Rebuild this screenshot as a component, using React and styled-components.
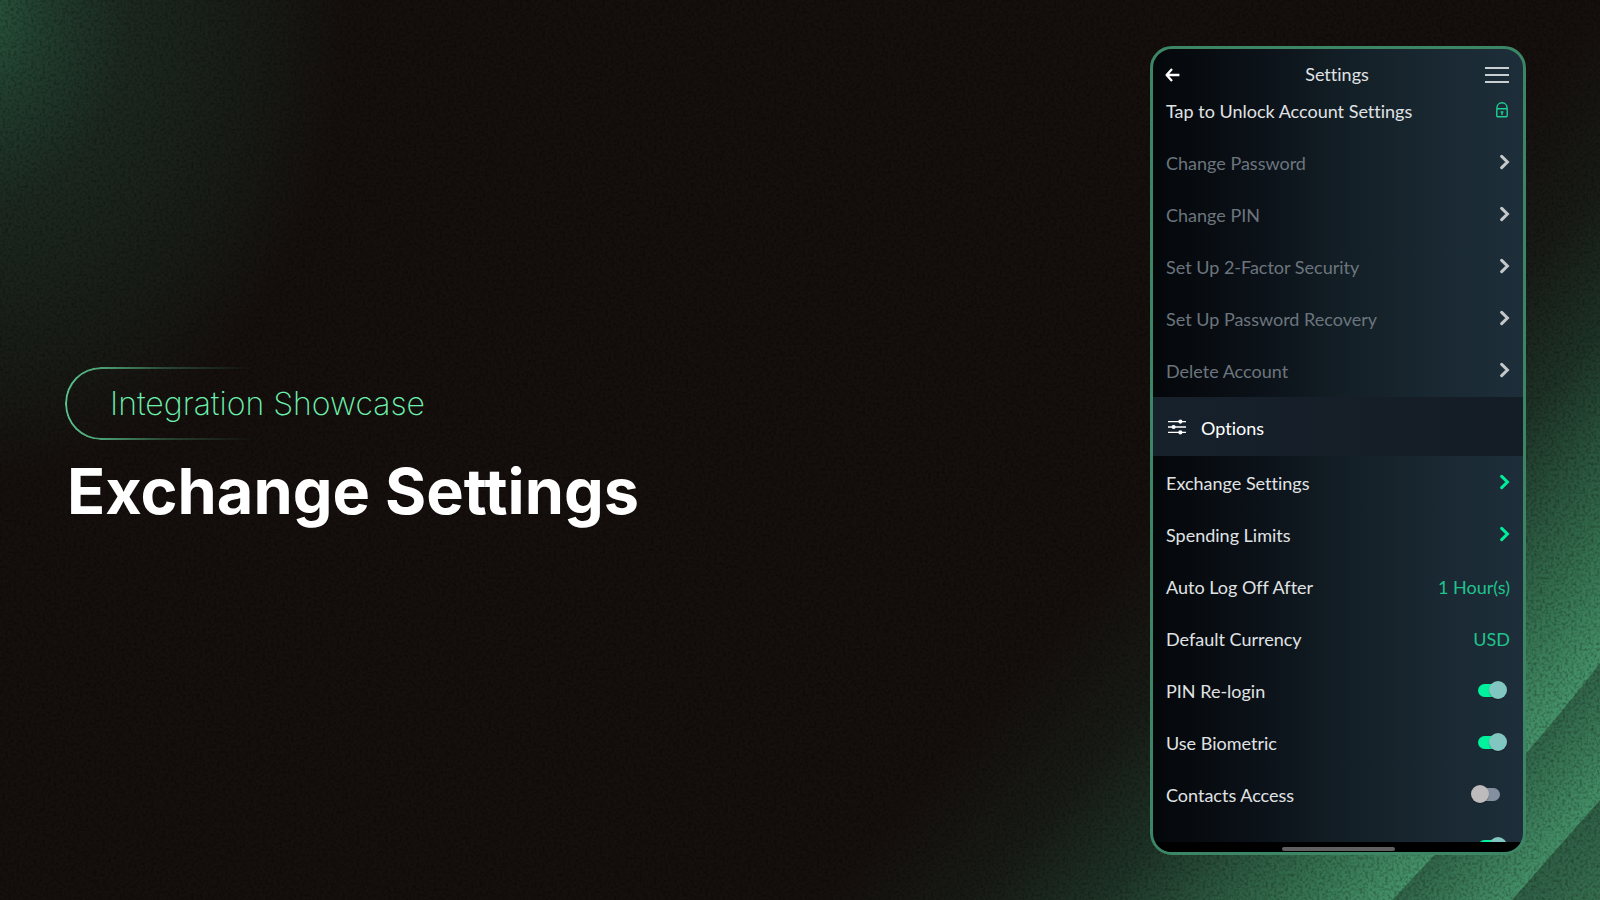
import { useId, useState } from "react"
import styled, { createGlobalStyle } from "styled-components"

const GlobalStyle = createGlobalStyle`
  * {
    box-sizing: border-box;
  }
  body {
    margin: 0;
    background: #150f0d;
    font-family: Lato, sans-serif;
    font-variant-ligatures: none;
  }
`

const Page = styled.main`
  position: relative;
  display: flex;
  justify-content: space-between;
  gap: 40px;
  height: 100vh;
  padding: 46px 74px 45px 65px;
  overflow: hidden;
`

const Backdrop = styled.svg`
  position: absolute;
  inset: 0;
  width: 100%;
  height: 100%;
`

const Intro = styled.section`
  position: relative;
  display: flex;
  flex-direction: column;
  align-self: center;
  gap: 8px;
`

const Tag = styled.p`
  position: relative;
  margin: 0;
  padding: 0 45px;
  font-family: Inter, sans-serif;
  font-size: 32px;
  font-weight: 200;
  line-height: 73px;
  color: #6cf2ae;

  &::before {
    content: "";
    position: absolute;
    inset: 0;
    border: 2px solid #5ac58e;
    border-right: 0;
    border-radius: 36px 0 0 36px;
    mask-image: linear-gradient(to right, #000 0, rgba(0, 0, 0, 0.8) 36px, rgba(0, 0, 0, 0.3) 100px, transparent 190px);
  }
`

const Title = styled.h1`
  margin: 0;
  padding-left: 2px;
  font-family: Inter, sans-serif;
  font-size: 63px;
  font-weight: 700;
  line-height: 86px;
  color: #ffffff;
`

const Phone = styled.section`
  position: relative;
  display: flex;
  flex-direction: column;
  flex: 0 0 376px;
  border: 3px solid #3c8565;
  border-radius: 22px;
  overflow: hidden;
  background: linear-gradient(to right, #04070a 0%, #0c1219 30%, #131f26 52%, #1a2933 80%, #1d2e3a 100%);
  color: #e0e3e5;
  font-size: 18px;
`

const TopBar = styled.header`
  display: grid;
  grid-template-columns: 24px 1fr 24px;
  align-items: center;
  padding: 14px 14px 0 12px;
`

const ScreenTitle = styled.h2`
  margin: 0;
  font-size: 18px;
  font-weight: 400;
  line-height: 22px;
  text-align: center;
`

const IconButton = styled.button`
  display: flex;
  padding: 2px 0 0;
  border: 0;
  background: none;
  color: ${(props) => props.$color || "#ffffff"};
  cursor: pointer;
`

const Content = styled.div`
  flex: 1;
  min-height: 0;
  overflow: hidden;
`

const List = styled.ul`
  margin: 0;
  padding: 0;
  list-style: none;
`

const Row = styled.li`
  display: flex;
  align-items: center;
  justify-content: space-between;
  height: 52px;
  padding: 0 13px 2px 13px;
`

const RowButton = styled.button`
  display: flex;
  flex: 1;
  align-items: center;
  justify-content: space-between;
  padding: 0;
  border: 0;
  background: none;
  font: inherit;
  color: inherit;
  cursor: pointer;
`

const RowText = styled.span`
  padding-top: 2px;
  line-height: 22px;
  color: ${(props) => (props.$muted ? "#6c757e" : "inherit")};
`

const Value = styled(RowText)`
  color: #1fc48d;
`

const SectionHeader = styled.h3`
  display: flex;
  align-items: center;
  gap: 15px;
  height: 59px;
  margin: 0 0 1px;
  padding: 0 15px;
  background: linear-gradient(to right, #17212b, #141c25);
  font-size: 18px;
  font-weight: 400;
  color: #ffffff;
`

const SectionTitle = styled.span`
  padding-top: 2px;
`

const Toggle = styled.input`
  appearance: none;
  position: relative;
  width: 22px;
  height: 13px;
  margin: 0 10px 0 0;
  border-radius: 7px;
  background: #8490a0;
  cursor: pointer;

  &::after {
    content: "";
    position: absolute;
    top: -3px;
    left: -7px;
    width: 18px;
    height: 18px;
    border-radius: 50%;
    background: #bdbbbb;
    box-shadow: 0 1px 1px rgba(0, 0, 0, 0.3);
  }

  &:checked {
    background: #00f29c;
  }

  &:checked::after {
    left: 11px;
    background: #81c6c0;
  }
`

const HomeBar = styled.div`
  display: flex;
  align-items: center;
  justify-content: center;
  height: 10px;
  padding-top: 3px;
  background: #000000;
`

const HomeIndicator = styled.span`
  width: 113px;
  height: 4px;
  border-radius: 2px;
  background: #606060;
`

function BackArrow() {
  return (
    <svg width="16" height="14" viewBox="0 0 16 14" fill="none" stroke="currentColor" strokeWidth="2.3">
      <path d="M7 1 1.6 7 7 13M1.6 7H14.4" strokeLinejoin="round" />
    </svg>
  )
}

function MenuIcon() {
  return (
    <svg width="24" height="16" viewBox="0 0 24 16" stroke="currentColor" strokeWidth="1.8">
      <path d="M0 1h24M0 8h24M0 15h24" />
    </svg>
  )
}

function LockIcon() {
  return (
    <svg width="14" height="16" viewBox="0 0 14 16" fill="none" stroke="#1fd094" strokeWidth="1.4">
      <rect x="0.8" y="6.8" width="10.4" height="8" rx="1" />
      <path d="M1 7V5.4a5 4.6 0 0 1 10 0V7M6 9.2v3.8M4.6 10h2.8" />
    </svg>
  )
}

function Chevron({ color }) {
  return (
    <svg width="10" height="16" viewBox="0 0 10 16" fill="none" stroke={color} strokeWidth="3" strokeLinecap="round">
      <path d="M1.7 2.4 7.4 8 1.7 13.6" />
    </svg>
  )
}

function SlidersIcon() {
  return (
    <svg width="18" height="16" viewBox="0 0 18 16" fill="currentColor" stroke="currentColor" strokeWidth="1.4">
      <path d="M0 2.6h18M0 8h18M0 13.4h18" />
      <circle cx="12.4" cy="2.6" r="1.4" />
      <circle cx="5.6" cy="8" r="1.4" />
      <circle cx="12.4" cy="13.4" r="1.4" />
    </svg>
  )
}

function Background() {
  return (
    <Backdrop viewBox="0 0 1600 900" preserveAspectRatio="none" aria-hidden="true">
      <defs>
        <radialGradient id="corner" gradientUnits="userSpaceOnUse" cx="0" cy="0" r="1" gradientTransform="translate(-30 10) scale(380 480)">
          <stop offset="0" stopColor="#2b5a41" />
          <stop offset="0.2" stopColor="#213d2d" />
          <stop offset="0.42" stopColor="#1c281f" />
          <stop offset="0.75" stopColor="#181b16" />
          <stop offset="1" stopColor="#150f0d" />
        </radialGradient>
        <linearGradient id="glow" gradientUnits="userSpaceOnUse" x1="1196" y1="460" x2="1527" y2="750">
          <stop offset="0" stopColor="#150f0d" />
          <stop offset="0.28" stopColor="#181b16" />
          <stop offset="0.5" stopColor="#1e3326" />
          <stop offset="0.67" stopColor="#2a543d" />
          <stop offset="0.84" stopColor="#367452" />
          <stop offset="1" stopColor="#459269" />
        </linearGradient>
        <linearGradient id="foldOne" gradientUnits="userSpaceOnUse" x1="1527" y1="755" x2="1595" y2="815">
          <stop offset="0" stopColor="#31664a" />
          <stop offset="1" stopColor="#459269" />
        </linearGradient>
        <linearGradient id="foldTwo" gradientUnits="userSpaceOnUse" x1="1556" y1="850" x2="1606" y2="894">
          <stop offset="0" stopColor="#2e5f45" />
          <stop offset="1" stopColor="#376f50" />
        </linearGradient>
        <filter id="grain" x="0" y="0" width="100%" height="100%">
          <feTurbulence type="fractalNoise" baseFrequency="0.35" numOctaves="2" seed="4" />
          <feColorMatrix values="0 0 0 0 0  0 0 0 0 0  0 0 0 0 0  1.8 0 0 0 -0.75" />
        </filter>
      </defs>
      <rect width="1600" height="900" fill="#150f0d" />
      <rect width="500" height="600" fill="url(#corner)" />
      <path d="M700 900V500L1200 0H1600V900z" fill="url(#glow)" />
      <path d="M1600 663Q1530 755 1392 900H1600z" fill="url(#foldOne)" />
      <path d="M1600 800 1512 900H1600z" fill="url(#foldTwo)" />
      <rect width="1600" height="900" filter="url(#grain)" opacity="0.38" />
    </Backdrop>
  )
}

function LinkRow({ label, locked }) {
  return (
    <Row>
      <RowButton type="button">
        <RowText $muted={locked}>{label}</RowText>
        <Chevron color={locked ? "#c3c8cb" : "#00ee9a"} />
      </RowButton>
    </Row>
  )
}

function ValueRow({ label, value }) {
  return (
    <Row>
      <RowButton type="button">
        <RowText>{label}</RowText>
        <Value>{value}</Value>
      </RowButton>
    </Row>
  )
}

function ToggleRow({ label, initial }) {
  const id = useId()
  const [on, setOn] = useState(initial)

  return (
    <Row>
      <RowText as="label" htmlFor={id}>{label}</RowText>
      <Toggle id={id} type="checkbox" aria-label={label || "More"} checked={on} onChange={() => setOn(!on)} />
    </Row>
  )
}

const accountItems = [
  "Change Password",
  "Change PIN",
  "Set Up 2-Factor Security",
  "Set Up Password Recovery",
  "Delete Account",
]

function App() {
  return (
    <Page>
      <GlobalStyle />
      <Background />
      <Intro>
        <Tag>Integration Showcase</Tag>
        <Title>Exchange Settings</Title>
      </Intro>
      <Phone>
        <TopBar>
          <IconButton type="button" aria-label="Back"><BackArrow /></IconButton>
          <ScreenTitle>Settings</ScreenTitle>
          <IconButton type="button" aria-label="Menu" $color="#c9ced1"><MenuIcon /></IconButton>
        </TopBar>
        <Content>
          <List>
            <Row>
              <RowButton type="button">
                <RowText>Tap to Unlock Account Settings</RowText>
                <LockIcon />
              </RowButton>
            </Row>
            {accountItems.map((label) => (
              <LinkRow key={label} label={label} locked />
            ))}
          </List>
          <SectionHeader>
            <SlidersIcon />
            <SectionTitle>Options</SectionTitle>
          </SectionHeader>
          <List>
            <LinkRow label="Exchange Settings" />
            <LinkRow label="Spending Limits" />
            <ValueRow label="Auto Log Off After" value="1 Hour(s)" />
            <ValueRow label="Default Currency" value="USD" />
            <ToggleRow label="PIN Re-login" initial={true} />
            <ToggleRow label="Use Biometric" initial={true} />
            <ToggleRow label="Contacts Access" initial={false} />
            <ToggleRow label="" initial={true} />
          </List>
        </Content>
        <HomeBar>
          <HomeIndicator />
        </HomeBar>
      </Phone>
    </Page>
  )
}

export default App
